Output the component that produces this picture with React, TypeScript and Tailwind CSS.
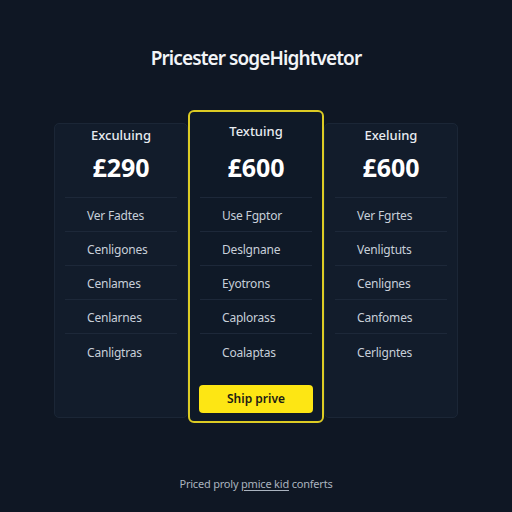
import { ReactElement } from "react";

interface Plan {
  label: string;
  price: string;
  features: string[];
  featured?: boolean;
}

const plans: Plan[] = [
  {
    label: "Exculuing",
    price: "£290",
    features: ["Ver Fadtes", "Cenligones", "Cenlames", "Cenlarnes", "Canligtras"],
  },
  {
    label: "Textuing",
    price: "£600",
    features: ["Use Fgptor", "Deslgnane", "Eyotrons", "Caplorass", "Coalaptas"],
    featured: true,
  },
  {
    label: "Exeluing",
    price: "£600",
    features: ["Ver Fgrtes", "Venligtuts", "Cenlignes", "Canfomes", "Cerligntes"],
  },
];

const PlanCard = ({ plan }: { plan: Plan }): ReactElement => {
  const featured = plan.featured === true;
  return (
    <div
      className={
        featured
          ? "relative z-10 flex h-[313px] w-[136px] flex-col rounded-[6px] border-2 border-[#dccb24] bg-[#0f1927] pt-[9px]"
          : "mt-[13px] flex h-[295px] w-[134px] flex-col rounded-[5px] border border-[#1b2636] bg-[#121c2b] pt-[1px]"
      }
    >
      <div className="text-center text-[13px] font-medium leading-[20px] text-[#e8ecf1]">
        {plan.label}
      </div>
      <div
        className={
          featured
            ? "mt-[10px] text-center text-[25px] font-bold leading-[32px] text-white"
            : "mt-[6px] text-center text-[25px] font-bold leading-[32px] text-white"
        }
      >
        {plan.price}
      </div>
      <div className="mx-[10px] mt-[14px] border-t border-[#1d2839]">
        {plan.features.map((f, i) => (
          <div
            key={f}
            className={
              i < plan.features.length - 1
                ? "flex h-[34px] items-center border-b border-[#1d2839] pt-[3px] pl-[22px] text-[12px] tracking-[-0.2px] text-[#c7cfd9]"
                : "flex h-[34px] items-center pt-[3px] pl-[22px] text-[12px] tracking-[-0.2px] text-[#c7cfd9]"
            }
          >
            {f}
          </div>
        ))}
      </div>
      {featured && (
        <div className="mt-auto mb-[8px] px-[9px]">
          <button className="h-[28px] w-full rounded-[4px] bg-[#fde614] text-[12px] font-semibold text-[#1b1b14]">
            Ship prive
          </button>
        </div>
      )}
    </div>
  );
};

const App = (): ReactElement => {
  return (
    <div
      className="flex h-[512px] w-[512px] flex-col items-center bg-[#0f1724] pt-[44px]"
      style={{ fontFamily: '"Noto Sans", "Open Sans", sans-serif' }}
    >
      <h1 className="text-[19px] font-semibold leading-[28px] tracking-[-0.9px] text-[#f2f4f7]">
        Pricester sogeHightvetor
      </h1>
      <div className="mt-[38px] flex items-start">
        {plans.map((p) => (
          <PlanCard key={p.label} plan={p} />
        ))}
      </div>
      <p className="mt-[53px] text-[11px] leading-[16px] tracking-[-0.2px] text-[#aab3bf]">
        Priced proly <span className="underline underline-offset-2">pmice kid</span> conferts
      </p>
    </div>
  );
};

export default App;
